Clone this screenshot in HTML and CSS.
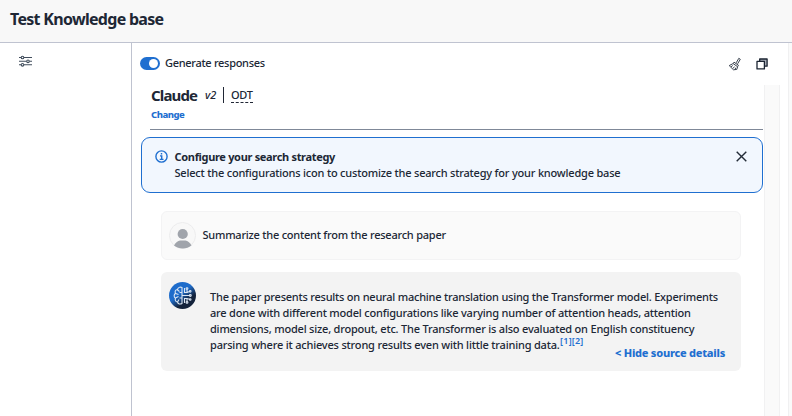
FILE: index.html
```html
<!DOCTYPE html>
<html lang="en">
<head>
<meta charset="utf-8">
<title>Test Knowledge base</title>
<link rel="stylesheet" href="styles.css">
</head>
<body>
<header class="header"><h1>Test Knowledge base</h1></header>
<div class="layout">
  <aside class="side">
    <svg class="sliders" width="13" height="12" viewBox="0 0 13 12" fill="none" stroke="#414d5c" stroke-width="1.1">
      <path d="M0 2.500h2M5 2.500h8M0 6.300h7.500M10.500 6.300h2.500M0 9.800h2M5 9.800h8"/>
      <circle cx="3.500" cy="2.500" r="1.300"/><circle cx="9" cy="6.300" r="1.300"/><circle cx="3.500" cy="9.800" r="1.300"/>
    </svg>
  </aside>
  <main class="main">
    <div class="toolbar">
      <span class="toggle"><span class="knob"></span></span>
      <span class="toggle-label">Generate responses</span>
      <svg class="broom" width="14" height="14" viewBox="0 0 14 14" fill="none" stroke="#3a424e" stroke-width="1">
        <path d="M8.200 5.800 10.800 1.300l1.500 1-2.700 4.500M6 5.200l4.400 3-.8 1.500-4.600-3.200zM4.800 6.700 1.200 8.600l4.300 4.200 3.300-.4.8-2.600M3 9.800l1.800-1.300M4.800 11.400l1.800-1.600M7 12.500l.8-1.800"/>
      </svg>
      <svg class="copy" width="12" height="12" viewBox="0 0 12 12" stroke="#1b2432" stroke-width="1.300" stroke-linejoin="round">
        <path fill="#a9aeb8" d="M3.700 1h7.400v7.200H3.700z"/><path fill="#fff" d="M1 3.400h7.400v7.500H1z"/>
      </svg>
    </div>
    <div class="body">
      <div class="content">
        <section class="model">
          <div class="model-row"><strong>Claude</strong><em>v2</em><i class="bar"></i><span class="odt">ODT</span></div>
          <a class="change">Change</a>
        </section>
        <section class="alert">
          <svg class="info" width="13" height="13" viewBox="0 0 13 13" fill="none" stroke="#1f6fd0" stroke-width="1.400">
            <circle cx="6.500" cy="6.500" r="5.600"/><path d="M6.500 3v1.400M5 5.900h1.700v3.300M4.700 9.400h3.800"/>
          </svg>
          <div class="alert-text">
            <div class="alert-title">Configure your search strategy</div>
            <div class="alert-desc">Select the configurations icon to customize the search strategy for your knowledge base</div>
          </div>
          <svg class="close" width="11" height="11" viewBox="0 0 11 11" stroke="#232b37" stroke-width="1.400"><path d="M.7.7l9.600 9.600M10.300.7.7 10.300"/></svg>
        </section>
        <section class="card user">
          <svg class="avatar" width="27" height="27" viewBox="0 0 27 27">
            <circle cx="13.500" cy="13.500" r="13" fill="#f8f8f8" stroke="#ececed"/>
            <circle cx="13.700" cy="12" r="5.100" fill="#a0a4ab"/>
            <path d="M5 23.500c1.500-3 4-4.500 6-5h5.500c2 .5 4.500 2 6 5-5 4-12.500 4-17.500 0z" fill="#a0a4ab"/>
          </svg>
          <p class="question">Summarize the content from the research paper</p>
        </section>
        <section class="card answer">
          <svg class="avatar" width="27" height="27" viewBox="0 0 27 27">
            <defs><linearGradient id="g" x1=".2" y1=".1" x2=".8" y2=".9"><stop offset=".4" stop-color="#1e6ccb"/><stop offset=".75" stop-color="#14233b"/></linearGradient></defs>
            <circle cx="13.500" cy="13.500" r="13.500" fill="url(#g)"/>
            <g fill="none" stroke="#dbe6f3" stroke-width="1.100">
              <path d="M13 5.500c-2-1-4 0-4.500 2-2 .3-3 2-2 3.700-1.800 1.300-1.800 3.700 0 5-.8 2 .2 3.600 2 3.800.5 2 2.500 2.600 4.500 1.500zM8.500 8l2 1.500M6.500 11.500l3 1M6.500 16l3-1.500M8.500 20l1.500-2.500M13 10.500h-2.500M13 16h-2.500"/>
              <path d="M15.500 6v4.500h2.500V7.500M13 13.500h7.500M15.500 21v-4.500h2.500v3M18 10.500l2.500-1M18 16.500l2.500.8"/>
              <circle cx="18" cy="6.600" r=".9"/><circle cx="21.300" cy="13.500" r=".9"/><circle cx="18" cy="20.400" r=".9"/><circle cx="21.200" cy="9.300" r=".8"/><circle cx="21.200" cy="17.500" r=".8"/>
            </g>
          </svg>
          <div class="answer-text">
            <p class="line l1">The paper presents results on neural machine translation using the Transformer model. Experiments</p>
            <p class="line l2">are done with different model configurations like varying number of attention heads, attention</p>
            <p class="line l3">dimensions, model size, dropout, etc. The Transformer is also evaluated on English constituency</p>
            <p class="line l4">parsing where it achieves strong results even with little training data.<span class="refs">[1][2]</span></p>
            <a class="hide">&lt; Hide source details</a>
          </div>
        </section>
      </div>
      <div class="track"></div>
    </div>
  </main>
  <div class="edge"></div>
</div>
</body>
</html>
```
FILE: styles.css
```css
* { box-sizing: border-box; }
body { margin: 0; width: 792px; height: 416px; overflow: hidden; display: flex; flex-direction: column; background: #fff; color: #202735; font: 500 11px/16px "Noto Sans", "Open Sans", sans-serif; }
h1, p { margin: 0; white-space: nowrap; }
.header { height: 43px; flex: none; padding: 8px 0 0 10px; background: #f8f8f8; border-bottom: 1px solid #bfc3d0; }
h1 { font-size: 16px; line-height: 22px; font-weight: 700; letter-spacing: -.7px; }
.layout { flex: 1; display: flex; min-height: 0; }
.side { width: 131px; padding: 12px 0 0 19px; }
svg { display: block; flex: none; }
.main { width: 656px; border-left: 1px solid #bfc3d0; display: flex; flex-direction: column; }
.toolbar { height: 42px; flex: none; display: flex; align-items: center; padding: 0 19px 0 8px; }
.toggle { width: 20px; height: 13px; border-radius: 7px; background: #1f6fd0; padding: 2px; display: flex; justify-content: flex-end; margin: 0 5px 1px 0; }
.knob { width: 9px; height: 9px; border-radius: 50%; background: #fff; }
.toggle-label { flex: 1; white-space: nowrap; letter-spacing: -.3px; margin-bottom: 2px; }
.copy { margin-left: 14px; }
.body { flex: 1; display: flex; min-height: 0; }
.content { width: 632px; padding-left: 9px; }
.track { width: 16px; background: #fafafa; border-left: 1px solid #f1f1f2; border-right: 1px solid #f1f1f2; }
.edge { flex: 1; background: #fafafa; border-left: 1px solid #f0f0f1; margin-left: 1px; }
.model { margin-left: 9px; width: 613px; height: 45px; border-bottom: 1px solid #7f8898; }
.model-row { display: flex; align-items: center; height: 20px; white-space: nowrap; padding-left: 1px; }
.model-row strong { font-size: 15px; line-height: 20px; letter-spacing: -.85px; width: 54px; }
.model-row em { width: 18px; font-size: 11px; }
.bar { width: 1px; height: 16px; background: #202735; }
.odt { margin-left: 7px; line-height: 14px; border-bottom: 1px dashed #202735; letter-spacing: -.3px; }
.change { display: block; padding: 1px 0 0 1px; font-size: 9.500px; line-height: 18px; font-weight: 800; color: #1f6fd0; letter-spacing: -.5px; }
.alert { width: 622px; height: 56px; margin-top: 7px; border: 1px solid #1f6fd0; border-radius: 9px; background: #f2f7fe; display: flex; padding: 11px 15px 0 13px; }
.info { margin-top: 1px; }
.alert-text { flex: 1; margin-left: 6.500px; white-space: nowrap; }
.alert-title { font-weight: 700; letter-spacing: -.32px; }
.alert-desc { letter-spacing: -.2px; }
.close { margin-top: 2px; }
.card { width: 580px; margin-left: 20px; border-radius: 6px; display: flex; }
.user { height: 49px; margin-top: 18px; background: #fafafa; border: 1px solid #f3f3f4; padding: 10px 0 0 7px; }
.question { margin: 5px 0 0 6.500px; letter-spacing: -.23px; }
.answer { height: 99px; margin-top: 12px; background: #f3f3f3; padding: 10px 16px 0 8px; }
.answer-text { flex: 1; margin: 7px 0 0 14px; display: flex; flex-direction: column; }
.line { height: 16px; }
.l1 { letter-spacing: -.225px; }
.l2 { letter-spacing: -.195px; }
.l3 { letter-spacing: -.2px; }
.l4 { letter-spacing: -.19px; }
.refs { color: #1f6fd0; font-size: 9px; line-height: 0; position: relative; top: -5px; margin-left: .5px; letter-spacing: .2px; font-weight: 600; }
.hide { align-self: flex-end; margin-top: -8px; color: #1f6fd0; font-weight: 800; letter-spacing: -.25px; }
```
